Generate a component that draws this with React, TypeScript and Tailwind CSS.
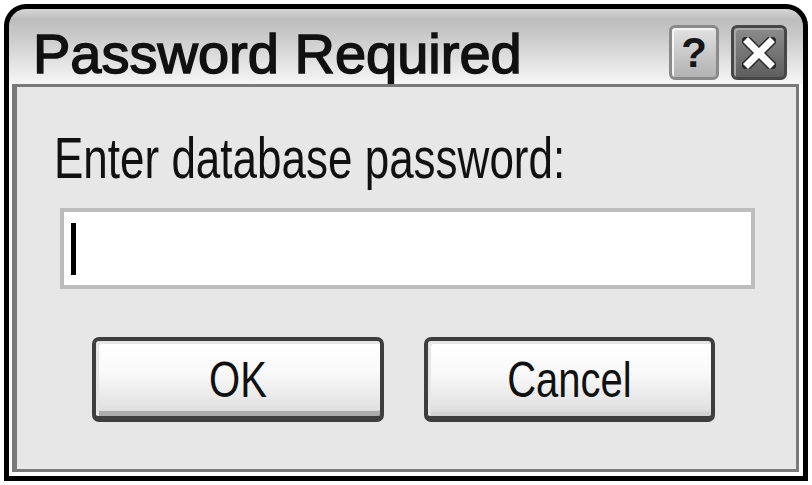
export default function App() {
  return (
    <div className="w-[812px] h-[485px] bg-white pt-[4px] pl-[4px] font-['Liberation_Sans',Arial,sans-serif] text-[#111]">
      {/* Dialog frame */}
      <div className="w-[804px] h-[477px] bg-black rounded-t-[22px] p-[5px] flex flex-col">
        <div className="flex-1 flex flex-col rounded-t-[17px] overflow-hidden">
          {/* Title bar */}
          <div className="h-[75px] shrink-0 flex items-start pt-[16px] pl-[24px] pr-[16px] bg-[linear-gradient(to_bottom,#d6d6d6_0%,#bdbdbd_14%,#c9c9c9_35%,#e5e5e5_75%,#f6f6f6_100%)]">
            <div className="flex-1 mt-[1px] h-[56px] text-[56px] leading-none whitespace-nowrap [-webkit-text-stroke:1.5px_#111]">
              Password Required
            </div>
            <div className="w-[50px] h-[55px] rounded-[6px] border-[3px] border-[#8a8a8a] bg-[linear-gradient(to_bottom,#e2e2e2,#b2b2b2)] shadow-[inset_2px_2px_0_#f4f4f4] flex items-center justify-center">
              <span className="text-[42px] leading-none font-bold text-[#161616]">?</span>
            </div>
            <div className="w-[56px] h-[55px] ml-[12px] rounded-[6px] border-[3px] border-[#474747] bg-[linear-gradient(to_bottom,#8c8c8c,#5e5e5e)] shadow-[inset_2px_2px_0_#a8a8a8] flex items-center justify-center">
              <svg width="34" height="32" viewBox="0 0 34 32">
                <path d="M5 4 L29 28 M29 4 L5 28" stroke="#2a2a2a" strokeWidth="10" strokeLinecap="square" />
                <path d="M6 5 L28 27 M28 5 L6 27" stroke="#ffffff" strokeWidth="7" strokeLinecap="square" />
              </svg>
            </div>
          </div>

          {/* Body */}
          <div className="flex-1 bg-white pl-[3px] pr-[4px] pb-[4px] flex">
            <div className="flex-1 flex flex-col border-t-[3px] border-l-[5px] border-r-[3px] border-b-[3px] border-[#7a7a7a] bg-[#e7e7e7]">
              <div className="ml-[37px] mt-[50px] h-[44px] text-[44px] leading-none scale-y-[1.3] whitespace-nowrap">
                Enter database password:
              </div>

              <div className="ml-[43px] mt-[27px] w-[695px] h-[81px] border-[4px] border-[#bdbdbd] bg-white flex items-center pl-[7px]">
                <div className="w-[5px] h-[52px] bg-black" />
              </div>

              <div className="ml-[75px] mt-[48px] flex gap-[40px]">
                <button className="w-[292px] h-[85px] rounded-[7px] border-[4px] border-b-[6px] border-[#3e3e3e] bg-[linear-gradient(to_bottom,#ffffff_0%,#fafafa_40%,#e4e4e4_85%,#d8d8d8_100%)] shadow-[inset_3px_3px_0_#e6e6e6,inset_0_-5px_0_#ababab] flex items-center justify-center">
                  <span className="block text-[40px] leading-none scale-y-[1.25]">OK</span>
                </button>
                <button className="w-[291px] h-[85px] rounded-[7px] border-[4px] border-b-[6px] border-[#3e3e3e] bg-[linear-gradient(to_bottom,#ffffff_0%,#fafafa_40%,#e4e4e4_85%,#d8d8d8_100%)] shadow-[inset_3px_3px_0_#e6e6e6,inset_0_-4px_0_#d2d2d2] flex items-center justify-center">
                  <span className="block text-[40px] leading-none scale-y-[1.25]">Cancel</span>
                </button>
              </div>
            </div>
          </div>
        </div>
      </div>
    </div>
  );
}
